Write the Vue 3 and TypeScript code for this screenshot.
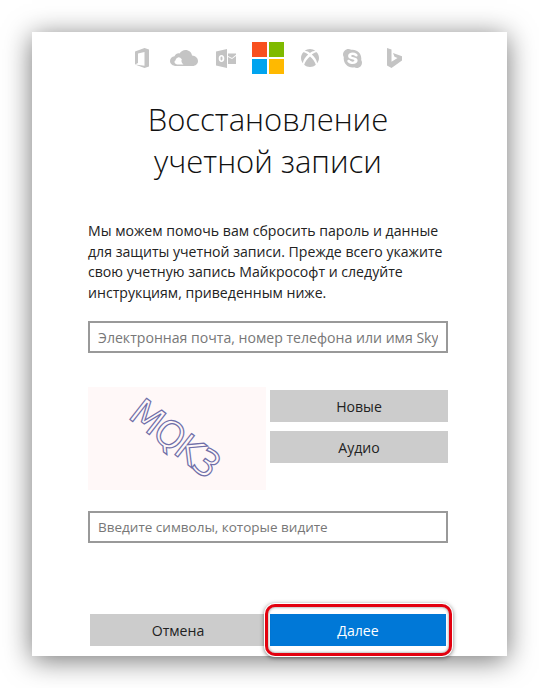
<template>
  <div class="page">
    <main class="card">
      <div class="brand-row">
        <span class="slot">
          <svg width="16" height="20" viewBox="0 0 16 20"><path d="M1 3.500 10.500 0 15 1.500v17L10.500 20 1 16.500l9.500 1.300V4L4 5.500v9.500L1 16.500z" /></svg>
        </span>
        <span class="slot">
          <svg width="28" height="16" viewBox="0 0 28 16"><path d="M6.500 16C2.500 16 0 13.700 0 11c0-2.600 2-4.400 4.500-4.700C5.500 4 7.500 3 9.500 3.400 11 1.300 13 0 15.500 0c3.500 0 6 2.300 6.500 5.500 3.300.2 6 2.400 6 5.500 0 2.800-2.300 5-5.500 5zM7 14.500h6.500C11.500 13 11 11 11.800 9.300 10.500 8 9.500 7 8 7.500 6.500 8 5.500 9.500 5.500 10.500 4 11 4 13.500 7 14.500z" /></svg>
        </span>
        <span class="slot">
          <svg width="20" height="19" viewBox="0 0 20 19"><path fill-rule="evenodd" d="M0 2.500 11 0v19L0 16.500zM5.500 6C3.700 6 2.700 7.500 2.700 9.500S3.700 13 5.500 13s2.800-1.500 2.800-3.500S7.300 6 5.500 6zm0 1.600c.8 0 1 .9 1 1.900s-.2 1.900-1 1.900-1-.9-1-1.900.2-1.900 1-1.900z" /><path d="M12 4.500h8v1.200l-4 3.200-4-2zM12 8l4 2 4-3v8h-8z" /></svg>
        </span>
        <span class="slot">
          <span class="ms-logo">
            <i class="red"></i><i class="green"></i><i class="blue"></i><i class="yellow"></i>
          </span>
        </span>
        <span class="slot">
          <svg width="18" height="18" viewBox="0 0 18 18"><path d="M3.400 2.200C5 .8 7 0 9 0s4 .8 5.600 2.200C12.700 1.400 10.700 2.400 9 4 7.300 2.400 5.300 1.400 3.400 2.200zM2.300 3.300C.8 4.900 0 6.900 0 9c0 2 .7 3.800 1.900 5.300C2 11.500 4.300 8 7.200 5.500 5.500 4 3.500 2.900 2.300 3.300zM15.700 3.300c1.500 1.600 2.300 3.600 2.300 5.700 0 2-.7 3.800-1.900 5.300C16 11.500 13.700 8 10.800 5.500c1.700-1.500 3.700-2.600 4.900-2.200zM9 7.500c-2.500 2.200-5 5.300-5.800 8.300C4.800 17.200 6.800 18 9 18s4.200-.8 5.800-2.200C14 12.800 11.500 9.700 9 7.500z" /></svg>
        </span>
        <span class="slot">
          <svg width="19" height="19" viewBox="0 0 19 19"><path fill-rule="evenodd" d="M5.500 0c1 0 1.900.3 2.600.8.500-.1.900-.1 1.400-.1 4.900 0 8.800 3.900 8.800 8.800 0 .5 0 1-.1 1.400.5.700.8 1.600.8 2.600 0 3-2.200 5.500-5.200 5.500-1 0-1.900-.3-2.600-.8-.5.100-1.100.2-1.700.2C4.600 18.400.7 14.500.7 9.500c0-.5 0-1 .1-1.400C.3 7.400 0 6.500 0 5.500 0 2.500 2.500 0 5.500 0zm4.200 3.600c-2.700 0-4.600 1.300-4.600 3.300 0 2 1.600 2.700 3.900 3.300 1.700.4 2.400.7 2.400 1.400 0 .6-.7 1.100-1.800 1.100-2.200 0-2.600-1.900-4-1.900-.8 0-1.300.6-1.300 1.300 0 1.500 2.400 3 5.400 3 3 0 4.900-1.400 4.900-3.500 0-2-1.700-2.800-4-3.300-1.700-.4-2.400-.6-2.400-1.200s.7-1 1.600-1c1.900 0 2.200 1.500 3.500 1.500.8 0 1.300-.5 1.300-1.200 0-1.300-2.100-2.800-4.900-2.800z" /></svg>
        </span>
        <span class="slot">
          <svg width="15" height="20" viewBox="0 0 15 20"><path d="M0 0 4.500 1.500v12.200L10.500 10 7.500 8.800 6 5 15 8.200v4.300L4.500 20 0 17.500z" /></svg>
        </span>
      </div>

      <h1 class="title">Восстановление<br>учетной записи</h1>

      <p class="lead">
        Мы можем помочь вам сбросить пароль и данные<br>
        для защиты учетной записи. Прежде всего укажите<br>
        свою учетную запись Майкрософт и следуйте<br>
        инструкциям, приведенным ниже.
      </p>

      <input class="field account" type="text" placeholder="Электронная почта, номер телефона или имя Skype">

      <div class="captcha-row">
        <div class="captcha"><span class="captcha-text">MQK3</span></div>
        <div class="captcha-actions">
          <button class="btn" type="button">Новые</button>
          <button class="btn" type="button">Аудио</button>
        </div>
      </div>

      <input class="field chars" type="text" placeholder="Введите символы, которые видите">

      <div class="footer">
        <button class="btn" type="button">Отмена</button>
        <div class="next-wrap">
          <button class="btn primary" type="button">Далее</button>
          <span class="highlight"></span>
        </div>
      </div>
    </main>
  </div>
</template>

<script setup lang="ts">
</script>

<style>
html,
body {
  background: #fff;
}
</style>

<style scoped>
.page {
  box-sizing: border-box;
  height: 688px;
  padding: 32px 32px 0;
  overflow: hidden;
}

.card {
  box-sizing: border-box;
  width: 475px;
  height: 624px;
  padding: 10px 59px 0 56px;
  background: #fff;
  box-shadow: 0 4px 26px rgba(0, 0, 0, 0.55);
  font-family: "Open Sans", "Noto Sans", sans-serif;
  color: #222;
}

.brand-row {
  display: flex;
  justify-content: center;
  height: 32px;
}

.slot {
  display: flex;
  align-items: center;
  justify-content: center;
  width: 42px;
}

.slot svg {
  fill: #c4c4c4;
}

.ms-logo {
  display: grid;
  grid-template-columns: 15px 15px;
  grid-template-rows: 15px 15px;
  gap: 2px;
}

.ms-logo i {
  display: block;
}

.red { background: #f8501f; }
.green { background: #7fba00; }
.blue { background: #00a4ef; }
.yellow { background: #ffb900; }

.title {
  margin: 24px 0 0;
  font-size: 31px;
  font-weight: 300;
  line-height: 42px;
  text-align: center;
  color: #111;
}

.lead {
  margin: 39px 0 0;
  font-size: 14.100px;
  line-height: 20.500px;
  white-space: nowrap;
}

.field {
  display: block;
  box-sizing: border-box;
  width: 360px;
  height: 32px;
  padding: 0 8px;
  border: 2px solid #999;
  border-radius: 0;
  outline: none;
  background: #fff;
  font-family: inherit;
  font-size: 14.100px;
}

.field::placeholder {
  color: #777;
  opacity: 1;
}

.account {
  margin-top: 18px;
}

.chars {
  margin-top: 21px;
  font-size: 13.500px;
}

.captcha-row {
  display: flex;
  gap: 4px;
  margin-top: 34px;
}

.captcha {
  display: flex;
  align-items: center;
  justify-content: center;
  width: 178px;
  height: 103px;
  padding-right: 6px;
  box-sizing: border-box;
  overflow: hidden;
  background: #fff8f8;
}

.captcha-text {
  transform: rotate(38deg);
  font-family: "DejaVu Sans", sans-serif;
  font-size: 37px;
  letter-spacing: -2px;
  color: transparent;
  -webkit-text-stroke: 1.200px #6f6fa8;
}

.captcha-actions {
  display: flex;
  flex-direction: column;
  gap: 9px;
  padding-top: 3px;
}

.btn {
  display: block;
  width: 178px;
  height: 32px;
  padding: 0;
  border: none;
  background: #ccc;
  color: #222;
  font-family: inherit;
  font-size: 14.100px;
}

.footer {
  display: flex;
  gap: 4px;
  margin-top: 71px;
  margin-left: 2px;
}

.footer .btn {
  width: 176px;
}

.next-wrap {
  position: relative;
}

.primary.btn {
  background: #0078d7;
  color: #fff;
}

.highlight {
  position: absolute;
  top: -10px;
  right: -6px;
  bottom: -10px;
  left: -5px;
  border: 3px solid #e3000f;
  border-radius: 10px;
  box-shadow: 0 0 0 1px #fff, 0 1px 4px 1px rgba(0, 0, 0, 0.5), inset 0 0 3px rgba(0, 0, 0, 0.5);
}
</style>
